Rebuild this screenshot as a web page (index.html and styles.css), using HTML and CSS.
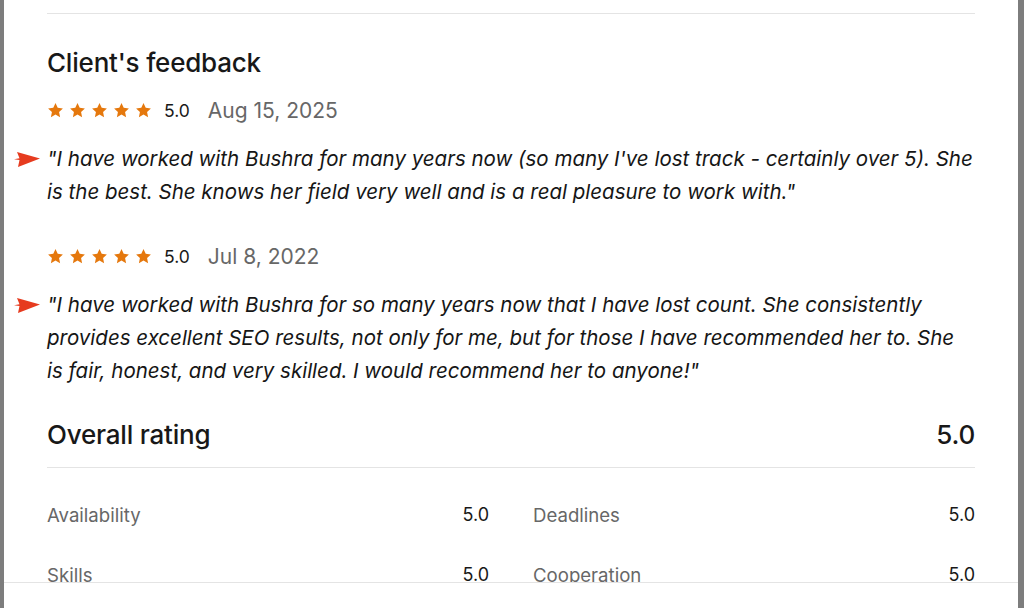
FILE: index.html
```html
<!DOCTYPE html>
<html lang="en">
<head>
<meta charset="utf-8">
<title>Client's feedback</title>
<link rel="stylesheet" href="styles.css">
</head>
<body>
<div class="panel">
  <hr class="divider top">
  <h2 class="title">Client's feedback</h2>

  <div class="review">
    <div class="meta">
      <span class="stars">
        <svg viewBox="0 0 20 20"><path d="M10 1.2l2.6 5.6 6.1.7-4.5 4.2 1.2 6.1L10 14.8 4.6 17.8l1.2-6.1L1.3 7.5l6.1-.7z"/></svg>
        <svg viewBox="0 0 20 20"><path d="M10 1.2l2.6 5.6 6.1.7-4.5 4.2 1.2 6.1L10 14.8 4.6 17.8l1.2-6.1L1.3 7.5l6.1-.7z"/></svg>
        <svg viewBox="0 0 20 20"><path d="M10 1.2l2.6 5.6 6.1.7-4.5 4.2 1.2 6.1L10 14.8 4.6 17.8l1.2-6.1L1.3 7.5l6.1-.7z"/></svg>
        <svg viewBox="0 0 20 20"><path d="M10 1.2l2.6 5.6 6.1.7-4.5 4.2 1.2 6.1L10 14.8 4.6 17.8l1.2-6.1L1.3 7.5l6.1-.7z"/></svg>
        <svg viewBox="0 0 20 20"><path d="M10 1.2l2.6 5.6 6.1.7-4.5 4.2 1.2 6.1L10 14.8 4.6 17.8l1.2-6.1L1.3 7.5l6.1-.7z"/></svg>
      </span>
      <span class="score">5.0</span>
      <span class="date">Aug 15, 2025</span>
    </div>
    <p class="quote">
      <svg class="pointer" viewBox="0 0 26 17"><polygon points="3,1 26,7.5 4,16 5.5,9 0,8.2 5.5,7.2"/></svg>
      "I have worked with Bushra for many years now (so many I've lost track - certainly over 5). She is the best. She knows her field very well and is a real pleasure to work with."
    </p>
  </div>

  <div class="review second">
    <div class="meta">
      <span class="stars">
        <svg viewBox="0 0 20 20"><path d="M10 1.2l2.6 5.6 6.1.7-4.5 4.2 1.2 6.1L10 14.8 4.6 17.8l1.2-6.1L1.3 7.5l6.1-.7z"/></svg>
        <svg viewBox="0 0 20 20"><path d="M10 1.2l2.6 5.6 6.1.7-4.5 4.2 1.2 6.1L10 14.8 4.6 17.8l1.2-6.1L1.3 7.5l6.1-.7z"/></svg>
        <svg viewBox="0 0 20 20"><path d="M10 1.2l2.6 5.6 6.1.7-4.5 4.2 1.2 6.1L10 14.8 4.6 17.8l1.2-6.1L1.3 7.5l6.1-.7z"/></svg>
        <svg viewBox="0 0 20 20"><path d="M10 1.2l2.6 5.6 6.1.7-4.5 4.2 1.2 6.1L10 14.8 4.6 17.8l1.2-6.1L1.3 7.5l6.1-.7z"/></svg>
        <svg viewBox="0 0 20 20"><path d="M10 1.2l2.6 5.6 6.1.7-4.5 4.2 1.2 6.1L10 14.8 4.6 17.8l1.2-6.1L1.3 7.5l6.1-.7z"/></svg>
      </span>
      <span class="score">5.0</span>
      <span class="date">Jul 8, 2022</span>
    </div>
    <p class="quote">
      <svg class="pointer" viewBox="0 0 26 17"><polygon points="3,1 26,7.5 4,16 5.5,9 0,8.2 5.5,7.2"/></svg>
      "I have worked with Bushra for so many years now that I have lost count. She consistently provides excellent SEO results, not only for me, but for those I have recommended her to. She is fair, honest, and very skilled. I would recommend her to anyone!"
    </p>
  </div>

  <div class="overall">
    <h2 class="overall-title">Overall rating</h2>
    <span class="overall-score">5.0</span>
  </div>

  <div class="breakdown">
    <div class="item"><span class="label">Availability</span><span class="value">5.0</span></div>
    <div class="item"><span class="label">Deadlines</span><span class="value">5.0</span></div>
    <div class="item"><span class="label">Skills</span><span class="value">5.0</span></div>
    <div class="item"><span class="label">Cooperation</span><span class="value">5.0</span></div>
  </div>

  <div class="footer-bar"></div>
</div>
</body>
</html>
```

FILE: styles.css
```css
* { box-sizing: border-box; }

html, body {
  margin: 0;
  padding: 0;
  height: 608px;
  overflow: hidden;
}

body {
  background: #7d7d7d;
  font-family: Inter, "Liberation Sans", Arial, sans-serif;
  color: #181818;
}

.panel {
  position: relative;
  margin: 0 6px 0 4px;
  height: 608px;
  background: #fff;
  padding: 13px 43px 0 43px;
  overflow: hidden;
}

.divider {
  border: 0;
  border-top: 1px solid #e4e4e4;
  margin: 0;
}

.title {
  margin: 32px 0 0 0;
  font-size: 26px;
  line-height: 34px;
  font-weight: 500;
  letter-spacing: -0.2px;
  color: #181818;
}

.review {
  margin-top: 16px;
}

.review.second {
  margin-top: 34px;
}

.meta {
  display: flex;
  align-items: center;
  height: 28px;
}

.stars {
  display: flex;
  gap: 5px;
}

.stars svg {
  width: 17px;
  height: 17px;
  fill: #e5780d;
}

.score {
  margin-left: 12px;
  font-size: 17.5px;
  color: #181818;
}

.date {
  margin-left: 18px;
  font-size: 21px;
  color: #676767;
}

.quote {
  position: relative;
  margin: 18px 0 0 0;
  font-size: 20.5px;
  line-height: 33px;
  font-style: italic;
  color: #161616;
}

.pointer {
  position: absolute;
  left: -33px;
  top: 9px;
  width: 26px;
  height: 17px;
  fill: #e63b1f;
}

.overall {
  display: flex;
  justify-content: space-between;
  align-items: center;
  margin-top: 31px;
  padding-bottom: 15px;
  border-bottom: 1px solid #e4e4e4;
}

.overall-title,
.overall-score {
  margin: 0;
  font-size: 26px;
  line-height: 34px;
  font-weight: 500;
  letter-spacing: -0.2px;
  color: #181818;
}

.breakdown {
  display: grid;
  grid-template-columns: 1fr 1fr;
  column-gap: 44px;
  row-gap: 36px;
  margin-top: 35px;
}

.item {
  display: flex;
  justify-content: space-between;
  line-height: 24px;
}

.label {
  font-size: 18.6px;
  color: #676767;
}

.value {
  font-size: 18px;
  color: #181818;
}

.footer-bar {
  position: absolute;
  left: 0;
  right: 0;
  bottom: 0;
  height: 26px;
  background: #fff;
  border-top: 1px solid #e4e4e4;
}
```
